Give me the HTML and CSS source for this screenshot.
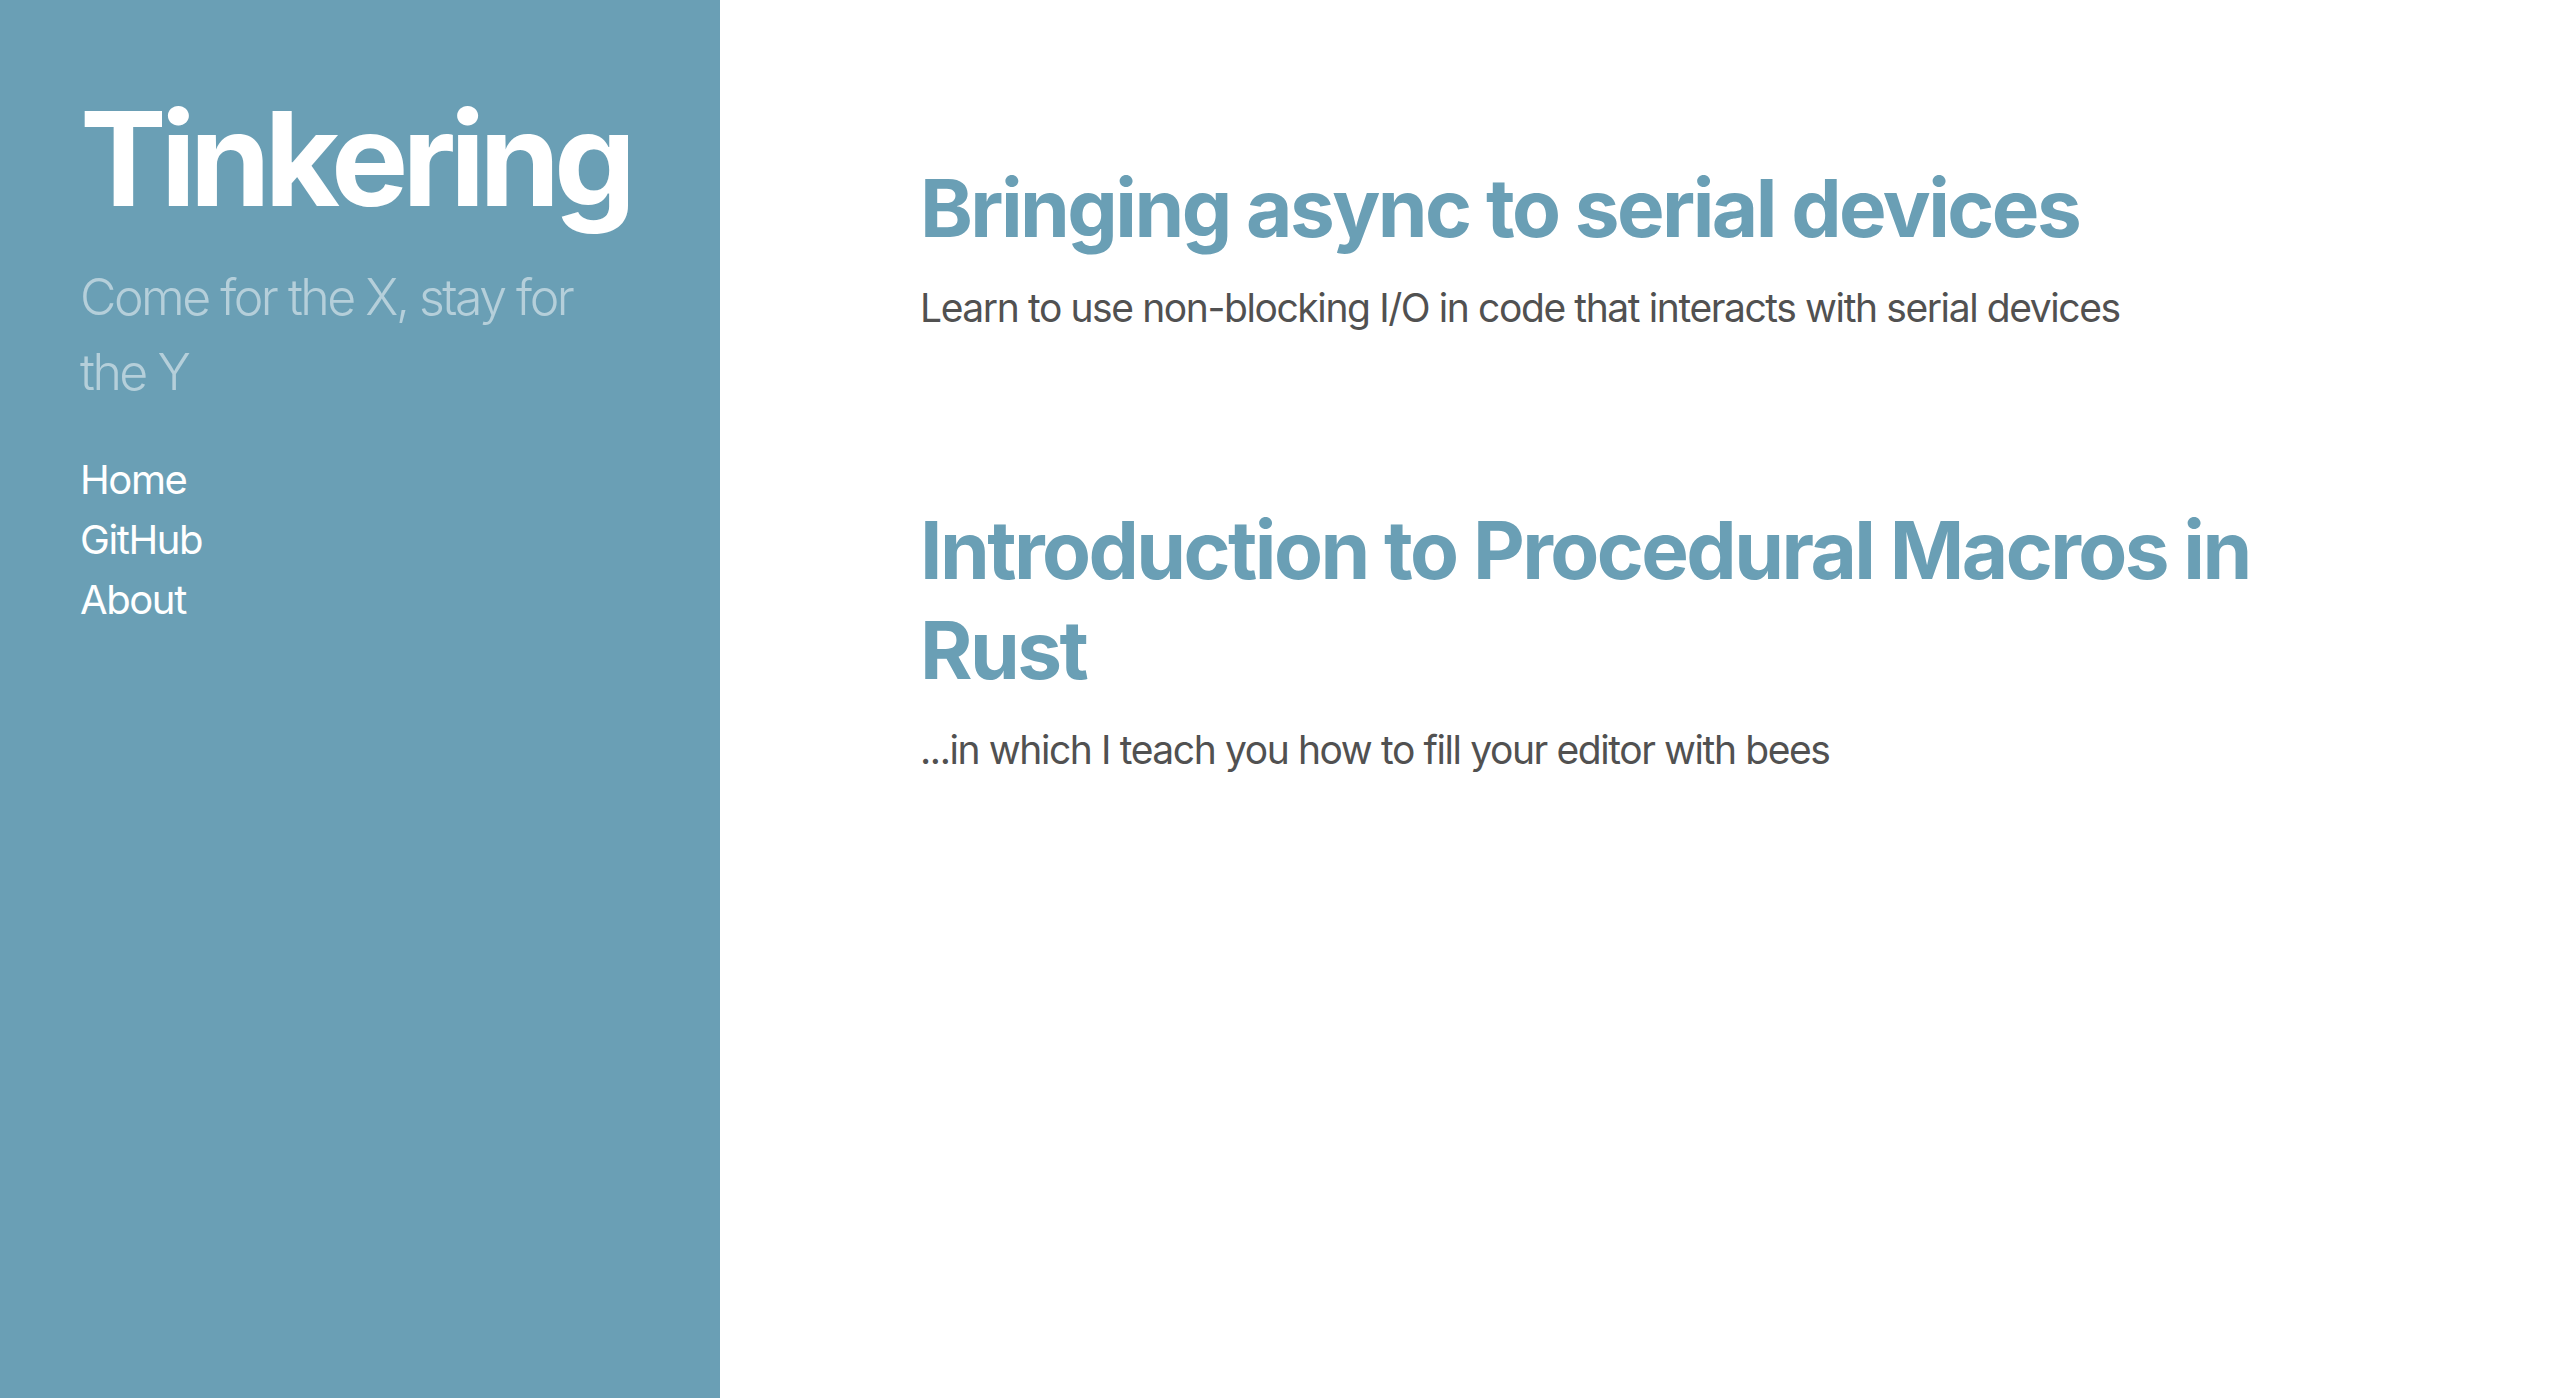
FILE: index.html
```html
<!DOCTYPE html>
<html lang="en">
<head>
<meta charset="utf-8">
<title>Tinkering</title>
<link rel="stylesheet" href="styles.css">
</head>
<body>
<div class="layout">
  <aside class="sidebar">
    <div class="sidebar-about">
      <h1 class="site-title"><a href="#">Tinkering</a></h1>
      <p class="lead">Come for the X, stay for the Y</p>
    </div>
    <nav class="sidebar-nav">
      <a class="sidebar-nav-item" href="#">Home</a>
      <a class="sidebar-nav-item" href="#">GitHub</a>
      <a class="sidebar-nav-item" href="#">About</a>
    </nav>
  </aside>
  <main class="content">
    <div class="posts">
      <article class="post">
        <h1 class="post-title"><a href="#">Bringing async to serial devices</a></h1>
        <p class="post-summary">Learn to use non-blocking I/O in code that interacts with serial devices</p>
      </article>
      <article class="post">
        <h1 class="post-title"><a href="#">Introduction to Procedural Macros in Rust</a></h1>
        <p class="post-summary">...in which I teach you how to fill your editor with bees</p>
      </article>
    </div>
  </main>
</div>
</body>
</html>
```
FILE: styles.css
```css
* { box-sizing: border-box; }
html, body { margin: 0; padding: 0; }
body {
  font-family: "Inter", "Helvetica", "Liberation Sans", sans-serif;
  color: #515151;
  background: #fff;
}
a { text-decoration: none; color: inherit; }

.layout {
  display: flex;
  min-height: 100vh;
}

.sidebar {
  flex: 0 0 720px;
  width: 720px;
  background-color: #6a9fb5;
  color: rgba(255, 255, 255, 0.5);
  padding: 78px 80px 80px 80px;
}
.site-title {
  margin: 0 0 19px 0;
  font-size: 130px;
  line-height: 1.25;
  font-weight: 700;
  letter-spacing: -0.047em;
  color: #fff;
}
.site-title a { color: #fff; }
.lead {
  margin: 0 0 40px 0;
  max-width: 540px;
  font-size: 50px;
  line-height: 1.5;
  font-weight: 300;
  letter-spacing: -0.05em;
}
.sidebar-nav {
  display: flex;
  flex-direction: column;
  align-items: flex-start;
}
.sidebar-nav-item {
  color: #fff;
  font-size: 40px;
  line-height: 1.5;
  letter-spacing: -0.035em;
}

.content {
  flex: 1;
  padding: 158px 0 160px 200px;
}
.posts {
  max-width: 1440px;
  display: flex;
  flex-direction: column;
  gap: 162px;
}
.post-title {
  margin: 0 0 21px 0;
  font-size: 80px;
  line-height: 1.25;
  font-weight: 700;
  letter-spacing: -0.032em;
  color: #6a9fb5;
}
.post-summary {
  margin: 0;
  font-size: 39px;
  line-height: 1.5;
  letter-spacing: -0.036em;
  color: #515151;
}
```
